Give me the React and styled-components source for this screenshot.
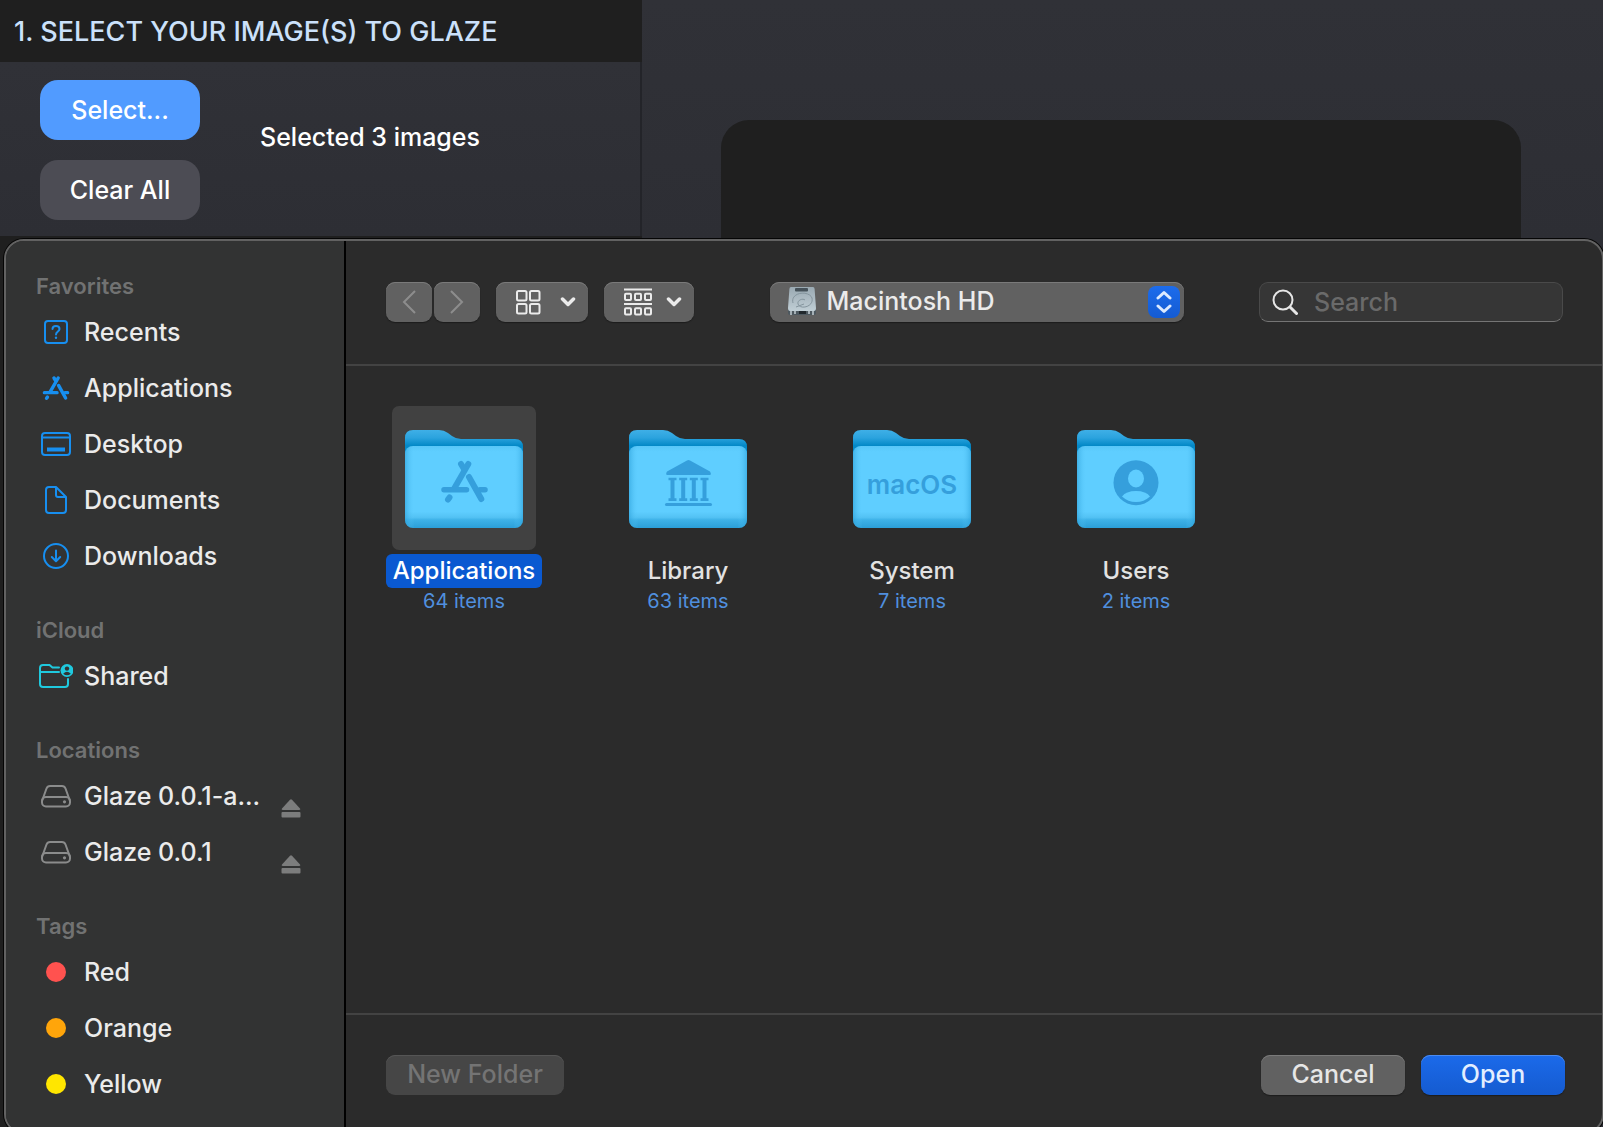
import React from "react";
import styled, { createGlobalStyle } from "styled-components";

const GlobalStyle = createGlobalStyle`
  * {
    box-sizing: border-box;
  }

  body {
    margin: 0;
    background: #2f3036;
    color: #e8e8e8;
    font-family: Inter, "Liberation Sans", sans-serif;
    font-weight: 500;
  }

  button, input, select {
    font-family: inherit;
    font-weight: inherit;
    color: inherit;
    border: none;
    margin: 0;
    padding: 0;
  }

  svg {
    display: block;
    flex: none;
  }
`;

/* window behind the sheet */

const Window = styled.div`
  position: relative;
  display: flex;
  height: 100vh;
  overflow: hidden;
  background: linear-gradient(#303137, #2d2e34 240px);
`;

const Steps = styled.div`
  flex: 0 0 642px;
  background: #1f1f1f;
`;

const StepTitle = styled.h1`
  margin: 0;
  height: 62px;
  padding-left: 14px;
  background: #1f1f1f;
  color: #cbe1fb;
  font-size: 27px;
  font-weight: 500;
  line-height: 64px;
`;

const StepBody = styled.div`
  display: flex;
  align-items: flex-start;
  gap: 60px;
  height: 174px;
  padding: 18px 40px;
  border-right: 2px solid #232429;
  background: linear-gradient(#303137, #2d2e34);
`;

const ButtonStack = styled.div`
  display: flex;
  flex-direction: column;
  gap: 20px;
`;

const PillButton = styled.button`
  width: 160px;
  height: 60px;
  border-radius: 18px;
  background: ${(p) => (p.$primary ? "#519bff" : "#4c4c54")};
  color: #fff;
  font-size: 25px;
`;

const Status = styled.p`
  margin: 0;
  color: #fff;
  font-size: 25px;
  line-height: 114px;
`;

const Preview = styled.div`
  flex: 1;
  margin: 120px 82px 0 79px;
  border-radius: 28px 28px 0 0;
  background: #1f1f1f;
`;

/* open panel */

const Dialog = styled.div`
  position: absolute;
  top: 239px;
  right: -1px;
  bottom: -7px;
  left: 4px;
  display: flex;
  overflow: hidden;
  border: 2px solid #626262;
  border-radius: 20px;
  background: #2b2b2b;
  box-shadow: 0 0 0 1px #050505;
`;

const Sidebar = styled.nav`
  flex: 0 0 340px;
  border-right: 2px solid #000;
  background: #323333;
`;

const SidebarHeading = styled.h2`
  margin: 0;
  padding: 26px 0 0 30px;
  color: #717272;
  font-size: 22px;
  font-weight: 600;
  line-height: 38px;
`;

const SidebarRow = styled.div`
  display: flex;
  height: 56px;
  padding: 0 43px 0 32px;
`;

const SidebarItem = styled.button`
  display: flex;
  flex: 1;
  align-items: center;
  gap: 10px;
  padding-bottom: 2px;
  background: none;
  color: #ebebeb;
  font-size: 25px;
  white-space: nowrap;
`;

const IconSlot = styled.span`
  display: flex;
  flex: 0 0 36px;
  justify-content: center;
  color: ${(p) => p.$color};
`;

const TagDot = styled.span`
  width: 20px;
  height: 20px;
  border-radius: 50%;
  background: currentColor;
`;

const EjectButton = styled.button`
  align-self: flex-end;
  padding-bottom: 7px;
  background: none;
  color: #7c7d7d;
`;

const Main = styled.div`
  display: flex;
  flex: 1;
  flex-direction: column;
  min-width: 0;
`;

const Toolbar = styled.div`
  display: flex;
  justify-content: space-between;
  padding: 41px 39px 42px 40px;
  border-bottom: 2px solid #434343;
`;

const ToolGroup = styled.div`
  display: flex;
  gap: ${(p) => p.$gap}px;
`;

const ToolButton = styled.button`
  display: flex;
  align-items: center;
  justify-content: center;
  width: 46px;
  height: 40px;
  border-radius: 9px;
  background: #616161;
  box-shadow: inset 0 1px 0 #7a7a7a, 0 1px 1px #1c1c1c;
  color: #ebebeb;

  &:disabled {
    color: #8d8d8d;
  }
`;

const MenuButton = styled(ToolButton)`
  justify-content: space-between;
  width: ${(p) => p.$width}px;
  padding: 0 12px 0 20px;
`;

const Popup = styled.label`
  position: relative;
  flex: 0 0 414px;
`;

const PopupSelect = styled.select`
  width: 100%;
  height: 40px;
  padding: 0 48px 2px 57px;
  border-radius: 9px;
  appearance: none;
  background: #616161;
  box-shadow: inset 0 1px 0 #7a7a7a, 0 1px 1px #1c1c1c;
  color: #ebebeb;
  font-size: 25px;
`;

const DiskBadge = styled.span`
  position: absolute;
  top: 4px;
  left: 16px;
  pointer-events: none;
`;

const PopupArrows = styled.span`
  position: absolute;
  top: 4px;
  right: 4px;
  display: flex;
  align-items: center;
  justify-content: center;
  width: 32px;
  height: 32px;
  border-radius: 8px;
  background: linear-gradient(#1c6cec, #145bd2);
  pointer-events: none;
`;

const SearchBox = styled.label`
  display: flex;
  flex: 0 0 304px;
  align-items: center;
  gap: 16px;
  min-width: 0;
  height: 40px;
  padding: 0 12px;
  border: 1px solid #4a4a4a;
  border-bottom-color: #757575;
  border-radius: 9px;
  background: #363636;
`;

const SearchInput = styled.input`
  flex: 1;
  min-width: 0;
  background: none;
  font-size: 25px;
  outline: none;

  &::placeholder {
    color: #6a6a6a;
    opacity: 1;
  }
`;

const Files = styled.div`
  display: flex;
  flex: 1;
  flex-wrap: wrap;
  align-content: flex-start;
  padding: 40px 6px;
`;

const FileItem = styled.button`
  display: flex;
  flex-direction: column;
  align-items: center;
  width: 224px;
  background: none;
`;

const FileIcon = styled.span`
  display: flex;
  align-items: center;
  justify-content: center;
  width: 144px;
  height: 144px;
  margin-bottom: 4px;
  border-radius: 7px;
  background: ${(p) => (p.$selected ? "#414141" : "none")};
`;

const FileName = styled.span`
  padding: 0 7px;
  border-radius: 6px;
  background: ${(p) => (p.$selected ? "#0a59d1" : "none")};
  color: ${(p) => (p.$selected ? "#fff" : "#e2e2e2")};
  font-size: 24px;
  line-height: 34px;
`;

const FileCount = styled.span`
  color: #508fde;
  font-size: 20px;
  font-weight: 400;
  line-height: 26px;
`;

const Footer = styled.div`
  display: flex;
  gap: 16px;
  height: 119px;
  padding: 40px 37px 0 40px;
  border-top: 2px solid #434343;
`;

const PushButton = styled.button`
  width: ${(p) => p.$width || 144}px;
  height: 40px;
  padding-bottom: 2px;
  border-radius: 9px;
  background: ${(p) => (p.$primary ? "linear-gradient(#1b6aea, #155bd0)" : "#616161")};
  box-shadow: inset 0 1px 0 ${(p) => (p.$primary ? "#4b8bf0" : "#7a7a7a")}, 0 1px 1px #1c1c1c;
  color: ${(p) => (p.$primary ? "#e3eeff" : "#e6e6e6")};
  font-size: 25px;

  &:disabled {
    margin-right: auto;
    background: #464646;
    box-shadow: inset 0 1px 0 #555;
    color: #747474;
  }
`;

const AppsGlyph = () => (
  <g fill="none" stroke="currentColor" strokeWidth="6" strokeLinecap="round">
    <path d="M64.300 35L50.500 59" />
    <path d="M57 35L60 40" />
    <path d="M45.500 68.500L44 70.500" />
    <path d="M40 60.700H62.500M76 60.700H81" strokeWidth="5.500" />
    <path d="M65 48L77.300 70" />
  </g>
);

const LibraryGlyph = () => (
  <g fill="currentColor">
    <path d="M59 31.500Q60.500 30.700 62 31.500L82 42.500Q84 46 81.500 46H39.500Q37 46 39 42.500Z" />
    {[44.5, 55.2, 65.8, 76.5].map((x) => (
      <path key={x} d={`M${x - 4} 48.700h8v2.600h-2v18h2v2.600h-8v-2.600h2v-18h-2z`} />
    ))}
    <rect x="37" y="74" width="47" height="3" rx="1.500" />
  </g>
);

const SystemGlyph = () => (
  <text x="60" y="65" textAnchor="middle" fill="currentColor" fontSize="26" fontWeight="600">
    macOS
  </text>
);

const UsersGlyph = () => (
  <g fill="currentColor">
    <circle cx="60" cy="53.700" r="22.500" />
    <ellipse cx="60" cy="49.500" rx="8" ry="9" fill="#5fcdff" />
    <path d="M46 67.500Q50 62 60 62T74 67.500Q68 73 60 73T46 67.500Z" fill="#5fcdff" />
  </g>
);

const Folder = ({ children }) => (
  <svg width="120" height="98" viewBox="0 0 120 98" overflow="visible" color="#359fdc">
    <defs>
      <linearGradient id="folder-back" x1="0" y1="0" x2="0" y2="22" gradientUnits="userSpaceOnUse">
        <stop offset="0" stopColor="#41b1e8" />
        <stop offset="0.4" stopColor="#2ba3de" />
        <stop offset="0.75" stopColor="#0489c8" />
      </linearGradient>
      <linearGradient id="folder-front" x1="0" y1="17" x2="0" y2="99" gradientUnits="userSpaceOnUse">
        <stop offset="0" stopColor="#57c6f8" />
        <stop offset="0.07" stopColor="#5fceff" />
        <stop offset="0.8" stopColor="#5fceff" />
        <stop offset="0.87" stopColor="#53c2f4" />
        <stop offset="0.9" stopColor="#3eb2e8" />
        <stop offset="1" stopColor="#2b9fd8" />
      </linearGradient>
      <linearGradient id="folder-edge">
        <stop offset="0" stopColor="#2b9fd8" stopOpacity="0.6" />
        <stop offset="0.08" stopColor="#5fceff" stopOpacity="0" />
        <stop offset="0.92" stopColor="#5fceff" stopOpacity="0" />
        <stop offset="1" stopColor="#2b9fd8" stopOpacity="0.6" />
      </linearGradient>
    </defs>
    <path
      d="M1 30V9Q1 1 9 1H35Q40 1 44 4L48 7Q52 10 57 10H111Q119 10 119 18V30Z"
      fill="url(#folder-back)"
    />
    <rect x="1" y="17" width="118" height="82" rx="8" fill="url(#folder-front)" />
    <rect x="1" y="17" width="118" height="82" rx="8" fill="url(#folder-edge)" />
    {children}
  </svg>
);

const RecentsIcon = () => (
  <svg width="24" height="24" fill="none" stroke="currentColor" strokeWidth="2">
    <rect x="1" y="1" width="22" height="22" rx="3" />
    <path d="M8.500 9C8.500 5 15.500 5 15.500 9C15.500 11.500 12 11.500 12 14.500" strokeLinecap="round" />
    <circle cx="12" cy="17.800" r="1.200" fill="currentColor" stroke="none" />
  </svg>
);

const ApplicationsIcon = () => (
  <svg width="28" height="26" viewBox="36 31 49 43">
    <AppsGlyph />
  </svg>
);

const DesktopIcon = () => (
  <svg width="30" height="24" fill="none" stroke="currentColor" strokeWidth="2">
    <rect x="1" y="1" width="28" height="22" rx="3" />
    <path d="M1 5.500H29" />
    <rect x="6" y="15.500" width="18" height="4" fill="currentColor" stroke="none" />
  </svg>
);

const DocumentsIcon = () => (
  <svg width="22" height="28" fill="none" stroke="currentColor" strokeWidth="2" strokeLinejoin="round">
    <path d="M4 1H11L21 11V24Q21 27 18 27H4Q1 27 1 24V4Q1 1 4 1Z" />
    <path d="M11 1V9Q11 11 13 11H21" />
  </svg>
);

const DownloadsIcon = () => (
  <svg width="26" height="26" fill="none" stroke="currentColor" strokeWidth="2" strokeLinecap="round">
    <circle cx="13" cy="13" r="12" />
    <path d="M13 7.500V18M8.800 14L13 18.300L17.200 14" strokeLinejoin="round" />
  </svg>
);

const SharedIcon = () => (
  <svg width="34" height="26" fill="none" stroke="currentColor" strokeWidth="2" strokeLinecap="round">
    <path d="M20 4.500H13.500L10.500 2H4Q1 2 1 5V21Q1 24 4 24H26Q29 24 29 21V16" />
    <path d="M1 9H20" />
    <circle cx="28" cy="7.500" r="6.500" fill="currentColor" stroke="none" />
    <circle cx="28" cy="5.600" r="2.200" fill="#323333" stroke="none" />
    <path d="M24.200 10.800Q28 6.800 31.800 10.800Q28 13.800 24.200 10.800Z" fill="#323333" stroke="none" />
  </svg>
);

const DriveIcon = () => (
  <svg width="30" height="24" fill="none" stroke="currentColor" strokeWidth="2">
    <path d="M1 17L5.500 4.500Q6.500 2 9 2H21Q23.500 2 24.500 4.500L29 17" />
    <rect x="1" y="13" width="28" height="9.500" rx="4" />
    <circle cx="23.500" cy="17.800" r="1.600" fill="currentColor" stroke="none" />
  </svg>
);

const EjectIcon = () => (
  <svg width="20" height="19" fill="currentColor">
    <path d="M9 .7Q10 -.3 11 .7L19 9.500Q20 11 18 11H2Q0 11 1 9.500Z" />
    <rect x="0.500" y="13" width="19" height="5.500" rx="1" />
  </svg>
);

const ChevronDown = () => (
  <svg width="16" height="10" fill="none" stroke="currentColor" strokeWidth="3.500" strokeLinecap="round" strokeLinejoin="round">
    <path d="M2.500 2L8 7.500L13.500 2" />
  </svg>
);

const GridIcon = () => (
  <svg width="25" height="25" fill="none" stroke="currentColor" strokeWidth="2">
    <rect x="1" y="1" width="9.500" height="9.500" rx="1.500" />
    <rect x="14" y="1" width="9.500" height="9.500" rx="1.500" />
    <rect x="1" y="14" width="9.500" height="9.500" rx="1.500" />
    <rect x="14" y="14" width="9.500" height="9.500" rx="1.500" />
  </svg>
);

const GroupIcon = () => (
  <svg width="28" height="28" fill="none" stroke="currentColor" strokeWidth="2">
    <path d="M0 1.500H28M0 16H28" />
    {[5.8, 20.3].map((y) =>
      [1, 11, 21].map((x) => (
        <rect key={`${x}-${y}`} x={x} y={y} width="6" height="6.200" rx="1" />
      ))
    )}
  </svg>
);

const DiskIcon = () => (
  <svg width="32" height="32">
    <defs>
      <linearGradient id="disk" x1="0" y1="0" x2="0" y2="1">
        <stop offset="0" stopColor="#9aa9b2" />
        <stop offset="1" stopColor="#c0ced5" />
      </linearGradient>
    </defs>
    <path d="M2 23H30V27Q30 29 28 29H4Q2 29 2 27Z" fill="#4d585f" />
    <path d="M5 25V29M9 25V28M23 25V28M27 25V29" stroke="#a5b0b6" strokeWidth="2" />
    <path d="M13 26.500H20" stroke="#20272c" strokeWidth="3" />
    <path d="M5 1H27Q28.500 1 28.600 3L30 22Q30 25 28 25H4Q2 25 2 22L3.400 3Q3.500 1 5 1Z" fill="url(#disk)" />
    <rect x="9" y="2" width="13" height="3.500" rx="1" fill="#46525a" />
    <path d="M7 17C4 6 23 4 26 12C28 21 14 24 12 18C11 14 17 12 19 14M18 18L10 21" fill="none" stroke="#84949d" strokeWidth="1" />
  </svg>
);

const favorites = [
  { name: "Recents", Icon: RecentsIcon },
  { name: "Applications", Icon: ApplicationsIcon },
  { name: "Desktop", Icon: DesktopIcon },
  { name: "Documents", Icon: DocumentsIcon },
  { name: "Downloads", Icon: DownloadsIcon },
];

const sections = [
  { title: "Favorites", color: "#178ff0", items: favorites },
  { title: "iCloud", color: "#1fc9de", items: [{ name: "Shared", Icon: SharedIcon }] },
  {
    title: "Locations",
    color: "#8b8c8c",
    items: [
      { name: "Glaze 0.0.1-a...", Icon: DriveIcon, eject: true },
      { name: "Glaze 0.0.1", Icon: DriveIcon, eject: true },
    ],
  },
  {
    title: "Tags",
    items: [
      { name: "Red", Icon: TagDot, color: "#ff524f" },
      { name: "Orange", Icon: TagDot, color: "#ffa50a" },
      { name: "Yellow", Icon: TagDot, color: "#ffe600" },
    ],
  },
];

const files = [
  { name: "Applications", count: "64 items", Glyph: AppsGlyph, selected: true },
  { name: "Library", count: "63 items", Glyph: LibraryGlyph },
  { name: "System", count: "7 items", Glyph: SystemGlyph },
  { name: "Users", count: "2 items", Glyph: UsersGlyph },
];

const SidebarSection = ({ title, color, items }) => (
  <section>
    <SidebarHeading>{title}</SidebarHeading>
    {items.map(({ name, Icon, eject, color: own }) => (
      <SidebarRow key={name}>
        <SidebarItem type="button">
          <IconSlot $color={own || color}>
            <Icon />
          </IconSlot>
          {name}
        </SidebarItem>
        {eject && (
          <EjectButton type="button" aria-label={`Eject ${name}`}>
            <EjectIcon />
          </EjectButton>
        )}
      </SidebarRow>
    ))}
  </section>
);

const OpenPanel = () => (
  <Dialog role="dialog" aria-label="Open">
    <Sidebar>
      {sections.map((section) => (
        <SidebarSection key={section.title} {...section} />
      ))}
    </Sidebar>
    <Main>
      <Toolbar>
        <ToolGroup $gap={16}>
          <ToolGroup $gap={2}>
            <ToolButton type="button" aria-label="Back" disabled>
              <svg width="14" height="24" fill="none" stroke="currentColor" strokeWidth="2">
                <path d="M13 1L2 12L13 23" />
              </svg>
            </ToolButton>
            <ToolButton type="button" aria-label="Forward" disabled>
              <svg width="14" height="24" fill="none" stroke="currentColor" strokeWidth="2">
                <path d="M1 1L12 12L1 23" />
              </svg>
            </ToolButton>
          </ToolGroup>
          <MenuButton type="button" $width={92} aria-label="View">
            <GridIcon />
            <ChevronDown />
          </MenuButton>
          <MenuButton type="button" $width={90} aria-label="Group">
            <GroupIcon />
            <ChevronDown />
          </MenuButton>
        </ToolGroup>
        <Popup>
          <PopupSelect aria-label="Location">
            <option>Macintosh HD</option>
          </PopupSelect>
          <DiskBadge>
            <DiskIcon />
          </DiskBadge>
          <PopupArrows>
            <svg width="16" height="24" fill="none" stroke="#dceaff" strokeWidth="3" strokeLinecap="round" strokeLinejoin="round">
              <path d="M2 8L8 2.500L14 8M2 16L8 21.500L14 16" />
            </svg>
          </PopupArrows>
        </Popup>
        <SearchBox>
          <svg width="26" height="26" fill="none" stroke="#e6e6e6" strokeWidth="2" strokeLinecap="round">
            <circle cx="11" cy="11" r="9.500" />
            <path d="M18 18L24.500 24.500" strokeWidth="3" />
          </svg>
          <SearchInput type="text" placeholder="Search" aria-label="Search" />
        </SearchBox>
      </Toolbar>
      <Files>
        {files.map(({ name, count, Glyph, selected }) => (
          <FileItem key={name} type="button">
            <FileIcon $selected={selected}>
              <Folder>
                <Glyph />
              </Folder>
            </FileIcon>
            <FileName $selected={selected}>{name}</FileName>
            <FileCount>{count}</FileCount>
          </FileItem>
        ))}
      </Files>
      <Footer>
        <PushButton type="button" $width={178} disabled>New Folder</PushButton>
        <PushButton type="button">Cancel</PushButton>
        <PushButton type="button" $primary>Open</PushButton>
      </Footer>
    </Main>
  </Dialog>
);

const App = () => (
  <>
    <GlobalStyle />
    <Window>
      <Steps>
        <StepTitle>1. SELECT YOUR IMAGE(S) TO GLAZE</StepTitle>
        <StepBody>
          <ButtonStack>
            <PillButton type="button" $primary>Select...</PillButton>
            <PillButton type="button">Clear All</PillButton>
          </ButtonStack>
          <Status>Selected 3 images</Status>
        </StepBody>
      </Steps>
      <Preview />
      <OpenPanel />
    </Window>
  </>
);

export default App;
